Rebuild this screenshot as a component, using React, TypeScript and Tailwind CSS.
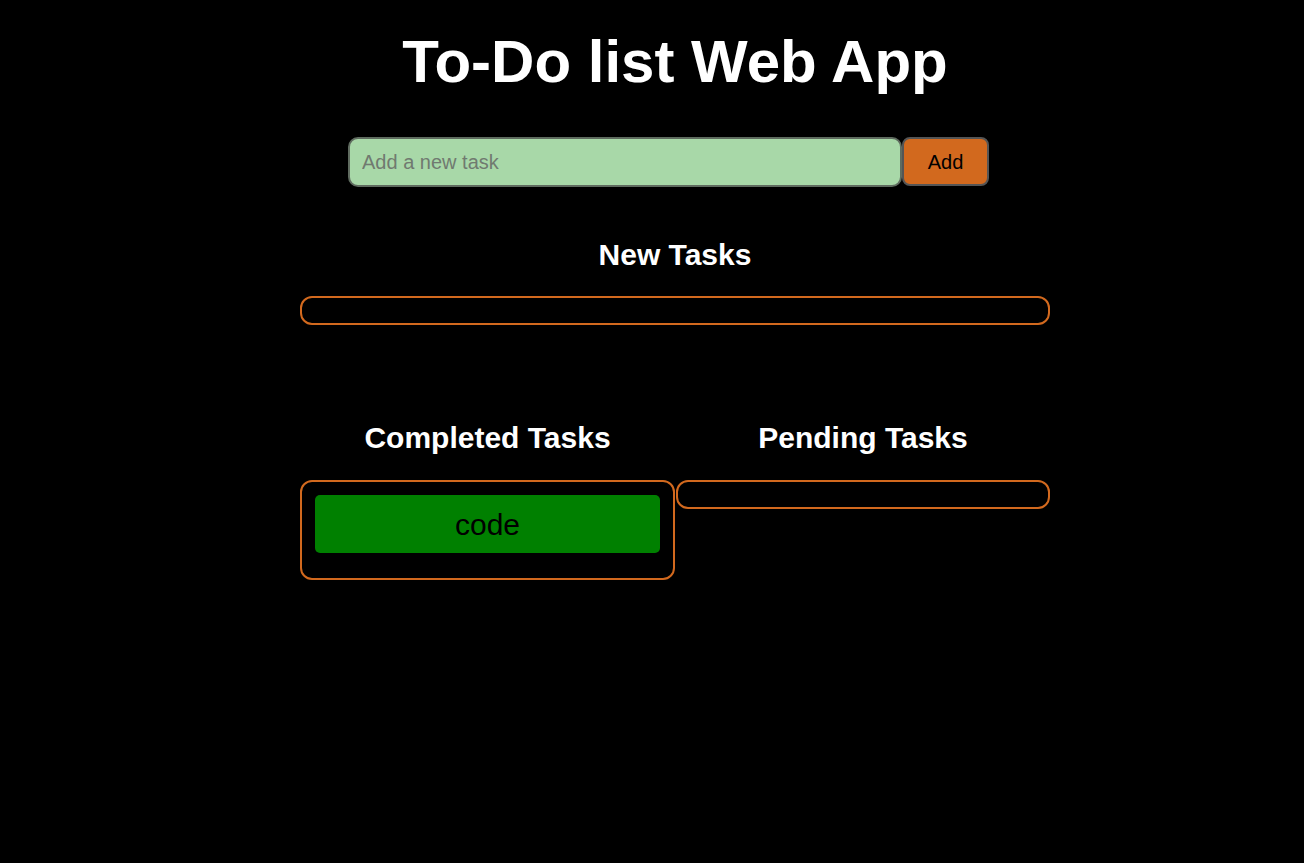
const TaskBox = ({ items }: { items: string[] }) => (
  <div className="rounded-[12px] border-2 border-[#d2691e] px-[13px] pt-[13px] pb-[12px]">
    {items.map((item) => (
      <div
        key={item}
        className="mb-[13px] flex h-[58px] items-center justify-center rounded-[5px] bg-[#008000] text-[30px] text-black"
      >
        {item}
      </div>
    ))}
  </div>
);

const App = () => {
  return (
    <div className="min-h-[863px] bg-black font-['Liberation_Sans',Arial,sans-serif] text-white">
      <div className="ml-[300px] w-[750px] pt-[27px]">
        <h1 className="text-center text-[60px] font-bold leading-[70px]">To-Do list Web App</h1>
        <div className="mt-[40px] ml-[48px] flex">
          <input
            type="text"
            placeholder="Add a new task"
            className="h-[50px] w-[554px] rounded-[10px] border-2 border-[#5f6b5f] bg-[#a8d8a8] px-[12px] text-[20px] text-black outline-none placeholder:text-[#707a70]"
          />
          <button className="h-[49px] w-[87px] rounded-[8px] border-2 border-[#555] bg-[#d2691e] text-[20px] text-black">
            Add
          </button>
        </div>
        <h2 className="mt-[50px] text-center text-[30px] font-bold leading-[36px]">New Tasks</h2>
        <div className="mt-[23px]">
          <TaskBox items={[]} />
        </div>
        <div className="mt-[95px] flex">
          <div className="w-[375px]">
            <h2 className="text-center text-[30px] font-bold leading-[36px]">Completed Tasks</h2>
            <div className="mt-[24px]">
              <TaskBox items={['code']} />
            </div>
          </div>
          <div className="ml-px w-[374px]">
            <h2 className="text-center text-[30px] font-bold leading-[36px]">Pending Tasks</h2>
            <div className="mt-[24px]">
              <TaskBox items={[]} />
            </div>
          </div>
        </div>
      </div>
    </div>
  );
};

export default App;
